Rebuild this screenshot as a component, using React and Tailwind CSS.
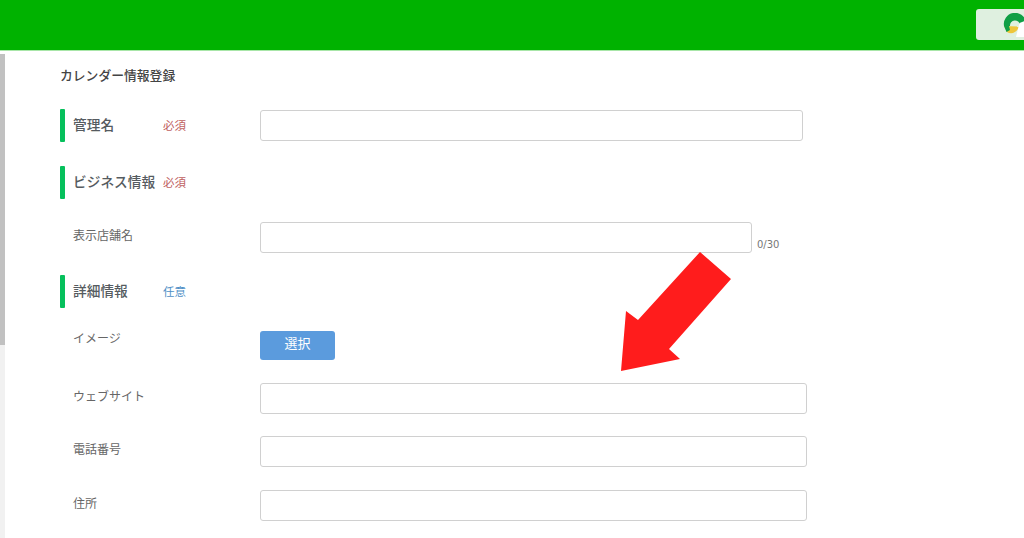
import React from "react";

const font = { fontFamily: '"Noto Sans CJK JP", "Noto Sans", sans-serif' };

function Logo() {
  return (
    <svg viewBox="0 0 24 24" className="h-[24px] w-[24px] shrink-0">
      <path d="M1 13 A11 11 0 1 1 23 9 L17 12 A5 5 0 0 0 7 13 Z" fill="#0f9f45" />
      <path d="M1 13 L16 13.5 C14 20 8 22 4 19 Z" fill="#eec63c" />
      <path d="M1 13 L6 13 L7 17 L3.5 19 Z" fill="#0f9f45" />
      <path d="M13 24 L16.5 10 L24 7 L24 24 Z" fill="#ffffff" />
    </svg>
  );
}

function Section({ label, tag, tagClass, className, children }) {
  return (
    <div className={`flex h-[33px] items-center ${className}`}>
      <div className="h-[33px] w-[5px] rounded-[1px] bg-[#06c05c]" />
      <div className="mb-[3px] ml-[8px] w-[90px] text-[13.7px] font-medium whitespace-nowrap text-[#555b60]">
        {label}
      </div>
      <div className={`w-[97px] text-[11.5px] ${tagClass}`}>{tag}</div>
      {children}
    </div>
  );
}

function Field({ label, className, inputClass = "w-[547px]", suffix }) {
  return (
    <div className={`flex h-[31px] items-center ${className}`}>
      <div className="mb-[5px] ml-[13px] w-[187px] text-[12px] text-[#666]">{label}</div>
      <input
        className={`h-[31px] rounded-[3px] border border-[#d0d0d0] bg-white ${inputClass}`}
      />
      {suffix}
    </div>
  );
}

export default function App() {
  return (
    <div className="relative h-[538px] w-[1024px] overflow-hidden bg-white" style={font}>
      <header className="flex h-[51px] items-start justify-end border-b border-[#a8e6a8] bg-[#00b200]">
        <div className="mt-[9px] flex h-[31px] w-[48px] items-center rounded-l-[3px] bg-[#dff0e0] pl-[27px]">
          <Logo />
        </div>
      </header>

      <div className="flex h-[487px]">
        <div className="mt-[3px] w-[5px] shrink-0 bg-[#f1f1f1]">
          <div className="h-[291px] bg-[#c1c1c1]" />
        </div>

        <main className="pl-[55px]">
          <h1 className="mt-[15px] h-[18px] text-[12.8px] leading-[18px] font-medium text-[#444]">
            カレンダー情報登録
          </h1>

          <Section
            label="管理名"
            tag="必須"
            tagClass="text-[#c0605f]"
            className="mt-[25px]"
          >
            <input className="-mt-[1px] h-[31px] w-[543px] rounded-[3px] border border-[#d0d0d0] bg-white" />
          </Section>

          <Section
            label="ビジネス情報"
            tag="必須"
            tagClass="text-[#c0605f]"
            className="mt-[24px]"
          />

          <Field
            label="表示店舗名"
            className="mt-[23px]"
            inputClass="w-[492px]"
            suffix={
              <span className="mt-[14px] ml-[5px] font-['DejaVu_Sans'] text-[10px] text-[#777]">
                0/30
              </span>
            }
          />

          <Section
            label="詳細情報"
            tag="任意"
            tagClass="text-[#4f8fc6]"
            className="mt-[22px]"
          />

          <div className="mt-[23px] flex items-start">
            <div className="mt-[-2px] ml-[13px] w-[187px] text-[12px] text-[#666]">イメージ</div>
            <button className="h-[29px] w-[75px] rounded-[3px] bg-[#5b9bdd] pb-[5px] text-[13px] text-white">
              選択
            </button>
          </div>

          <Field label="ウェブサイト" className="mt-[23px]" />
          <Field label="電話番号" className="mt-[22px]" />
          <Field label="住所" className="mt-[23px]" />
        </main>
      </div>

      {/* annotation arrow over the form */}
      <svg
        className="pointer-events-none absolute top-0 left-0"
        width="1024"
        height="538"
        viewBox="0 0 1024 538"
      >
        <polygon
          points="700,252 731,279 669,349 680,359 621,371 626,311 638,320"
          fill="#ff1c1c"
        />
      </svg>
    </div>
  );
}
